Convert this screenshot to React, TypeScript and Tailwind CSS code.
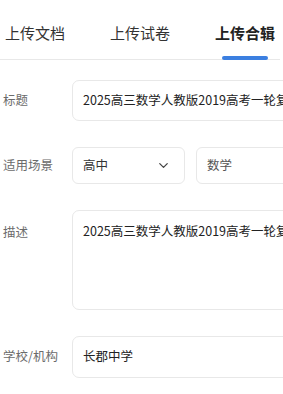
import { ChevronDown } from 'lucide-react'

const font = { fontFamily: '"Noto Sans CJK SC", "Noto Sans", sans-serif' }

const tabs = ['上传文档', '上传试卷', '上传合辑']

function Label({ children }: { children: React.ReactNode }) {
  return <div className="w-[72px] shrink-0 pl-[3px] text-[12.5px] text-[#6b6b6b]">{children}</div>
}

export default function App() {
  return (
    <div className="w-[283px] h-[394px] overflow-hidden bg-white" style={font}>
      {/* Tabs */}
      <div className="flex pl-[5px] pt-[22px] border-b border-[#e8e8e8] w-[280px] ml-[3px] -translate-x-[3px]">
        {tabs.map((t, i) => (
          <div key={t} className={`relative w-[60px] mr-[45px] pb-[14px] text-[15px] whitespace-nowrap ${i === 2 ? 'font-bold text-[#222]' : 'text-[#333]'}`}>
            {t}
            {i === 2 && (
              <span className="absolute left-[7px] bottom-[-1px] w-[46px] h-[4px] rounded-full bg-[#3b7fe0]" />
            )}
          </div>
        ))}
      </div>

      {/* Form */}
      <div className="w-[400px] pt-[20px] flex flex-col gap-[26px]">
        <div className="flex items-center">
          <Label>标题</Label>
          <div className="flex-1 h-[41px] rounded-[7px] border border-[#e8e8e8] px-[10px] flex items-center text-[12.5px] text-[#222] whitespace-nowrap">
            2025高三数学人教版2019高考一轮复习课件合辑
          </div>
        </div>

        <div className="flex items-center">
          <Label>适用场景</Label>
          <div className="flex gap-[11px] flex-1">
            <div className="w-[113px] h-[37px] rounded-[6px] border border-[#e8e8e8] pl-[10px] pr-[13px] flex items-center justify-between text-[12.5px] text-[#333]">
              <span>高中</span>
              <ChevronDown size={15} strokeWidth={2} className="text-[#444]" />
            </div>
            <div className="flex-1 h-[37px] rounded-[6px] border border-[#e8e8e8] pl-[10px] flex items-center text-[12.5px] text-[#555]">
              数学
            </div>
          </div>
        </div>

        <div className="flex items-start">
          <div className="pt-[13px]"><Label>描述</Label></div>
          <div className="flex-1 h-[100px] rounded-[7px] border border-[#e8e8e8] px-[10px] pt-[11px] text-[12.5px] text-[#222] whitespace-nowrap">
            2025高三数学人教版2019高考一轮复习课件合辑
          </div>
        </div>

        <div className="flex items-center">
          <Label>学校/机构</Label>
          <div className="flex-1 h-[42px] rounded-[7px] border border-[#e8e8e8] px-[10px] flex items-center text-[12.5px] text-[#222]">
            长郡中学
          </div>
        </div>
      </div>
    </div>
  )
}
